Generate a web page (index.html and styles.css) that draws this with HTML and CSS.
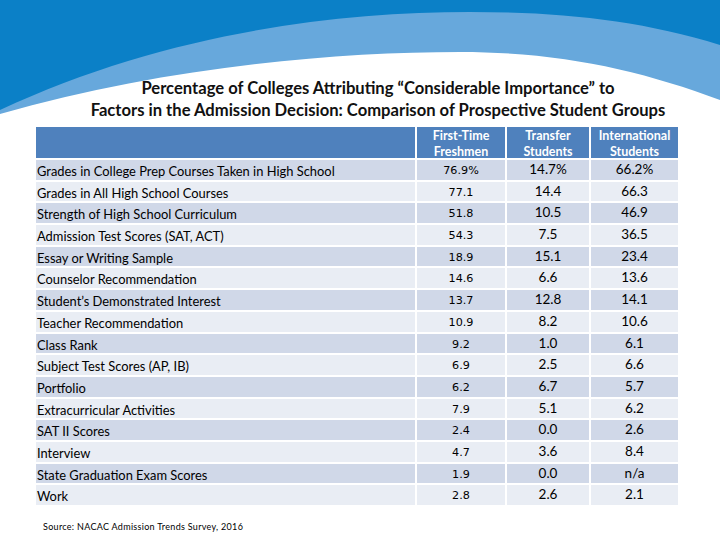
FILE: index.html
```html
<!DOCTYPE html>
<html>
<head>
<meta charset="utf-8">
<link rel="stylesheet" href="styles.css">
</head>
<body>
<div class="slide">
  <svg class="wave" width="720" height="130" viewBox="0 0 720 130">
    <path d="M0,0 H720 V100 C640,70 560,52 460,52 C330,52 160,68 0,114 Z" fill="#67a8dc"/>
    <path d="M0,0 H720 V45 C640,20 560,12 470,12 C330,12 160,35 0,110 Z" fill="#0b80c7"/>
  </svg>
  <div class="title">
    <div>Percentage of Colleges Attributing “Considerable Importance” to</div>
    <div>Factors in the Admission Decision: Comparison of Prospective Student Groups</div>
  </div>
  <div class="table">
    <div class="hd"></div>
    <div class="hd">First-Time<br>Freshmen</div>
    <div class="hd">Transfer<br>Students</div>
    <div class="hd">International<br>Students</div>

    <div class="lb d">Grades in College Prep Courses Taken in High School</div><div class="n1 d">76.9%</div><div class="n d">14.7%</div><div class="n d">66.2%</div>
    <div class="lb l">Grades in All High School Courses</div><div class="n1 l">77.1</div><div class="n l">14.4</div><div class="n l">66.3</div>
    <div class="lb d">Strength of High School Curriculum</div><div class="n1 d">51.8</div><div class="n d">10.5</div><div class="n d">46.9</div>
    <div class="lb l">Admission Test Scores (SAT, ACT)</div><div class="n1 l">54.3</div><div class="n l">7.5</div><div class="n l">36.5</div>
    <div class="lb d">Essay or Writing Sample</div><div class="n1 d">18.9</div><div class="n d">15.1</div><div class="n d">23.4</div>
    <div class="lb l">Counselor Recommendation</div><div class="n1 l">14.6</div><div class="n l">6.6</div><div class="n l">13.6</div>
    <div class="lb d">Student’s Demonstrated Interest</div><div class="n1 d">13.7</div><div class="n d">12.8</div><div class="n d">14.1</div>
    <div class="lb l">Teacher Recommendation</div><div class="n1 l">10.9</div><div class="n l">8.2</div><div class="n l">10.6</div>
    <div class="lb d">Class Rank</div><div class="n1 d">9.2</div><div class="n d">1.0</div><div class="n d">6.1</div>
    <div class="lb l">Subject Test Scores (AP, IB)</div><div class="n1 l">6.9</div><div class="n l">2.5</div><div class="n l">6.6</div>
    <div class="lb d">Portfolio</div><div class="n1 d">6.2</div><div class="n d">6.7</div><div class="n d">5.7</div>
    <div class="lb l">Extracurricular Activities</div><div class="n1 l">7.9</div><div class="n l">5.1</div><div class="n l">6.2</div>
    <div class="lb d">SAT II Scores</div><div class="n1 d">2.4</div><div class="n d">0.0</div><div class="n d">2.6</div>
    <div class="lb l">Interview</div><div class="n1 l">4.7</div><div class="n l">3.6</div><div class="n l">8.4</div>
    <div class="lb d">State Graduation Exam Scores</div><div class="n1 d">1.9</div><div class="n d">0.0</div><div class="n d">n/a</div>
    <div class="lb l">Work</div><div class="n1 l">2.8</div><div class="n l">2.6</div><div class="n l">2.1</div>
  </div>
  <div class="source">Source: NACAC Admission Trends Survey, 2016</div>
</div>
</body>
</html>
```
FILE: styles.css
```css
html, body {
  margin: 0;
  padding: 0;
  background: #ffffff;
}
.slide {
  position: relative;
  width: 720px;
  height: 540px;
  overflow: hidden;
  font-family: Lato, "Liberation Sans", sans-serif;
  color: #000;
}
.wave {
  position: absolute;
  left: 0;
  top: 0;
}
.title {
  position: relative;
  padding: 77px 0 0 36px;
  text-align: center;
  font-weight: bold;
  font-size: 16.6px;
  line-height: 22px;
  color: #111;
}
.table {
  display: grid;
  grid-template-columns: 379px 88px 82px 87px;
  grid-template-rows: 31px;
  grid-auto-rows: 19.7px;
  column-gap: 2px;
  row-gap: 2px;
  margin: 6px 0 0 36px;
  width: 642px;
}
.hd {
  background: #4f81bd;
  color: #fff;
  font-weight: bold;
  font-size: 12.5px;
  line-height: 16px;
  text-align: center;
  padding-top: 1px;
}
.d { background: #d0d8e8; }
.l { background: #e9edf4; }
.lb {
  font-size: 12.9px;
  line-height: 19.7px;
  padding-left: 1px;
  padding-top: 2px;
  box-sizing: border-box;
  white-space: nowrap;
}
.n1 {
  font-family: "DejaVu Sans", sans-serif;
  font-size: 11.2px;
  line-height: 19.7px;
  text-align: center;
  padding-top: 1px;
  box-sizing: border-box;
}
.n {
  font-size: 13.5px;
  line-height: 19.7px;
  text-align: center;
}
.source {
  font-size: 9px;
  letter-spacing: 0.3px;
  margin: 16px 0 0 43px;
}
```
